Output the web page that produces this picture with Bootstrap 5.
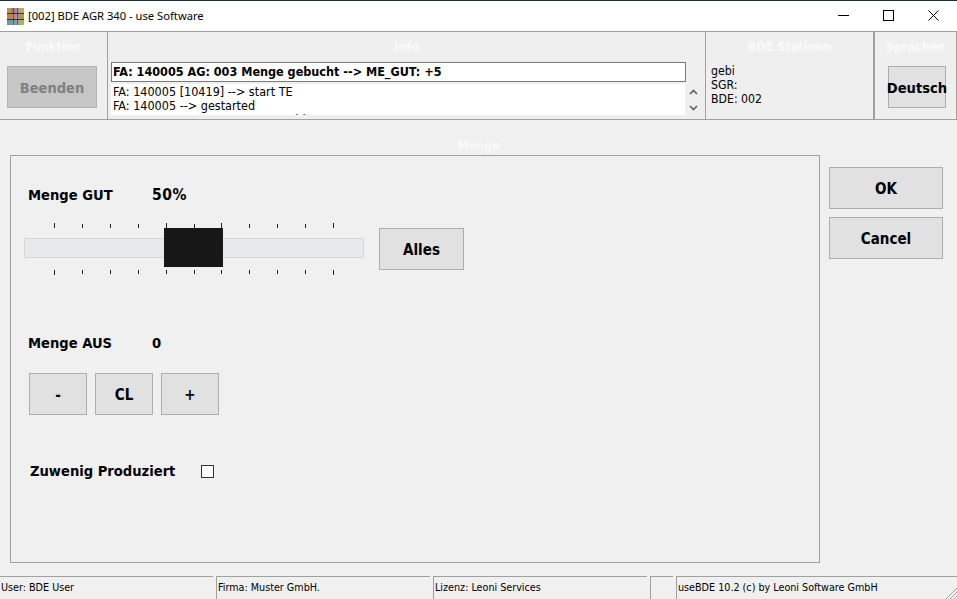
<!DOCTYPE html>
<html lang="de">
<head>
<meta charset="utf-8">
<title>[002] BDE AGR 340 - use Software</title>
<link href="https://cdn.jsdelivr.net/npm/bootstrap@5.3.0/dist/css/bootstrap.min.css" rel="stylesheet">
<style>
html,body{height:100%;}
body{width:957px;height:599px;overflow:hidden;background:#f0f0f0;color:#000;font-family:"DejaVu Sans Condensed","DejaVu Sans",sans-serif;font-size:12px;line-height:14px;}
.win{height:599px;border-top:1px solid #1a2e42;}
.tbar{height:30px;background:#fff;padding-left:7px;}
.ttl{font-family:"Noto Sans",sans-serif;font-size:11.2px;margin-left:4px;}
.wbtn{width:45px;height:28px;}
.wbtns{margin-right:1px;margin-bottom:2px;}
.tools{height:89px;border-top:1px solid #a0a0a0;border-bottom:1px solid #a0a0a0;border-right:1px solid #a0a0a0;background:#efefef;}
.pn{height:87px;border-right:1px solid #a0a0a0;position:relative;}
.pn1{width:108px;}
.pn2{width:598px;padding:30px 0 0 3px;}
.pn3{width:169px;padding:32px 0 0 5px;border-right-width:2px;font-size:12.2px;}
.pn4{width:81px;}
.cap{position:absolute;left:0;right:0;top:7px;text-align:center;color:#fafafa;font-weight:700;font-size:12.5px;line-height:15px;}
.gbtn{background:#e1e1e1;border:1px solid #adadad;border-radius:0;color:#000;font-weight:700;font-size:15px;line-height:18px;padding:2px 0 0;display:flex;align-items:center;justify-content:center;white-space:nowrap;}
.gbtn:hover{background:#e1e1e1;color:#000;border-color:#adadad;}
.off{width:90px;height:42px;margin:34px 0 0 7px;background:#c6c6c6;color:#808080;border-color:#b4b4b4;font-size:14.5px;}
.off:hover{background:#c6c6c6;color:#808080;border-color:#b4b4b4;}
.de{width:58px;height:42px;margin:34px 0 0 13px;overflow:visible;font-size:14.6px;}
.msg{width:575px;height:20px;border:1px solid #7a7a7a;background:#fff;font-weight:700;font-size:12.5px;line-height:18px;padding-left:1px;white-space:nowrap;}
.lg{width:574px;height:31px;flex:none;margin-top:2px;background:#fff;padding:1px 0 0 2px;overflow:hidden;font-size:12.5px;}
.arrs{width:16px;height:32px;flex:none;margin-top:2px;padding:5px 0 0 0;gap:10px;}
.mid{height:456px;position:relative;padding:35px 0 0 10px;}
.mcap{position:absolute;left:0;right:0;top:18px;text-align:center;color:#fafafa;font-weight:700;font-size:12.5px;line-height:15px;}
.grp{width:810px;height:408px;border:1px solid #a0a0a0;position:relative;padding:30px 0 0 17px;}
.lb{font-weight:700;font-size:14.6px;line-height:18px;white-space:nowrap;}
.lb1{width:124px;}
.pct{font-size:15.5px;letter-spacing:.6px;}
.sld{width:340px;height:61px;margin:19px 0 0 -4px;position:relative;}
.trk{position:absolute;left:0;right:0;top:15px;height:20px;background:#e7eaea;border:1px solid #d6d6d6;}
.thm{position:absolute;left:140px;top:5px;width:59px;height:39px;background:#171717;}
.tks{position:absolute;left:0;top:0;}
.all{width:85px;height:42px;margin-left:15px;margin-top:24px;}
.aus{margin-top:50px;}
.pads{margin-top:21px;margin-left:1px;gap:8px;}
.pad{width:58px;height:42px;}
.chk{margin-top:47px;margin-left:2px;}
.box{width:13px;height:13px;border:1px solid #333;background:#fff;margin-left:26px;}
.side{padding:12px 0 0 9px;gap:8px;}
.dlg{width:114px;height:42px;}
.sbar{height:23px;gap:3px;position:relative;}
.cell{height:23px;border-left:1px solid #a0a0a0;border-top:1px solid #a0a0a0;padding:4px 0 0 1px;font-size:10.7px;line-height:14px;white-space:nowrap;overflow:hidden;}
.c1{width:213px;border-left:0;}
.c2,.c3{width:214px;}
.c4{width:23px;}
.c5{width:281px;}
.grip{position:absolute;right:0;bottom:0;}
</style>
</head>
<body>
<div class="win">
  <div class="tbar d-flex align-items-center">
    <svg width="17" height="17" viewBox="0 0 17 17" aria-hidden="true">
      <rect width="17" height="17" fill="#9c8f8a"/>
      <rect x="0" y="0" width="4" height="5" fill="#b99a4d"/><rect x="4" y="0" width="4" height="5" fill="#a07a70"/><rect x="8" y="0" width="4" height="5" fill="#a58aa0"/><rect x="12" y="0" width="5" height="5" fill="#c0a850"/>
      <rect x="0" y="6" width="4" height="5" fill="#b78a3a"/><rect x="4" y="6" width="4" height="5" fill="#bf7f85"/><rect x="8" y="6" width="4" height="5" fill="#b98aa8"/><rect x="12" y="6" width="5" height="5" fill="#a5a040"/>
      <rect x="0" y="12" width="4" height="5" fill="#6f95a8"/><rect x="4" y="12" width="4" height="5" fill="#7f9aa8"/><rect x="8" y="12" width="4" height="5" fill="#8aa0b0"/><rect x="12" y="12" width="5" height="5" fill="#a8b840"/>
      <path d="M0 5.500H17M0 11.500H17" stroke="#3a3030" stroke-width="1"/>
      <path d="M6.500 0V17M10.500 0V17" stroke="#3a3030" stroke-width=".6"/>
    </svg>
    <span class="ttl">[002] BDE AGR 340 - use Software</span>
    <div class="wbtns d-flex ms-auto">
      <div class="wbtn d-flex align-items-center justify-content-center"><svg width="11" height="11" viewBox="0 0 11 11"><path d="M0 5.500H11" stroke="#000"/></svg></div>
      <div class="wbtn d-flex align-items-center justify-content-center"><svg width="11" height="11" viewBox="0 0 11 11"><rect x=".5" y=".5" width="10" height="10" fill="none" stroke="#000"/></svg></div>
      <div class="wbtn d-flex align-items-center justify-content-center"><svg width="11" height="11" viewBox="0 0 11 11"><path d="M.5 .5L10.500 10.500M10.500 .5L.5 10.500" stroke="#000"/></svg></div>
    </div>
  </div>
  <div class="tools d-flex">
    <div class="pn pn1"><div class="cap">Funktion</div><button class="btn gbtn off" type="button">Beenden</button></div>
    <div class="pn pn2">
      <div class="cap">Info</div>
      <div class="msg">FA: 140005 AG: 003 Menge gebucht --&gt; ME_GUT: +5</div>
      <div class="d-flex">
        <div class="lg"><div>FA: 140005 [10419] --&gt; start TE</div><div>FA: 140005 --&gt; gestarted</div><div>FA: 140005 AG: 003 --&gt; angemeldet</div></div>
        <div class="arrs d-flex flex-column align-items-center">
          <svg width="9" height="6" viewBox="0 0 9 6"><path d="M1 5L4.500 1.500L8 5" fill="none" stroke="#606060" stroke-width="1.600"/></svg>
          <svg width="9" height="6" viewBox="0 0 9 6"><path d="M1 1L4.500 4.500L8 1" fill="none" stroke="#606060" stroke-width="1.600"/></svg>
        </div>
      </div>
    </div>
    <div class="pn pn3"><div class="cap">BDE Statinon</div>gebi<br>SGR:<br>BDE: 002</div>
    <div class="pn pn4 border-0"><div class="cap">Sprachen</div><button class="btn gbtn de" type="button">Deutsch</button></div>
  </div>
  <div class="mid d-flex">
    <div class="mcap">Menge</div>
    <div class="grp">
      <div class="d-flex"><span class="lb lb1">Menge GUT</span><span class="lb pct">50%</span></div>
      <div class="d-flex">
        <div class="sld">
          <svg class="tks" width="340" height="61" viewBox="0 0 340 61" aria-hidden="true">
            <path d="M30.500 0v5M58.500 1v4M86.500 1v4M114.500 1v4M142.500 0v5M170.500 1v4M197.500 0v5M225.500 1v4M253.500 1v4M281.500 1v4M309.500 0v5M30.500 47v5M58.500 47v4M86.500 47v4M114.500 47v4M142.500 47v4M170.500 47v4M197.500 47v4M225.500 47v4M253.500 47v4M281.500 47v4M309.500 47v5" stroke="#222"/>
          </svg>
          <div class="trk"></div>
          <div class="thm"></div>
        </div>
        <button class="btn gbtn all" type="button">Alles</button>
      </div>
      <div class="d-flex aus"><span class="lb lb1">Menge AUS</span><span class="lb">0</span></div>
      <div class="d-flex pads">
        <button class="btn gbtn pad" type="button">-</button>
        <button class="btn gbtn pad" type="button">CL</button>
        <button class="btn gbtn pad" type="button">+</button>
      </div>
      <div class="d-flex align-items-center chk"><span class="lb">Zuwenig Produziert</span><span class="box"></span></div>
    </div>
    <div class="side d-flex flex-column">
      <button class="btn gbtn dlg" type="button">OK</button>
      <button class="btn gbtn dlg" type="button">Cancel</button>
    </div>
  </div>
  <div class="sbar d-flex">
    <div class="cell c1">User: BDE User</div>
    <div class="cell c2">Firma: Muster GmbH.</div>
    <div class="cell c3">Lizenz: Leoni Services</div>
    <div class="cell c4"></div>
    <div class="cell c5">useBDE 10.2 (c) by Leoni Software GmbH</div>
    <svg class="grip" width="12" height="12" viewBox="0 0 12 12" aria-hidden="true"><path d="M12 1L1 12M12 5L5 12M12 9L9 12" stroke="#a0a0a0"/></svg>
  </div>
</div>
<script src="https://cdn.jsdelivr.net/npm/bootstrap@5.3.0/dist/js/bootstrap.bundle.min.js"></script>
</body>
</html>
